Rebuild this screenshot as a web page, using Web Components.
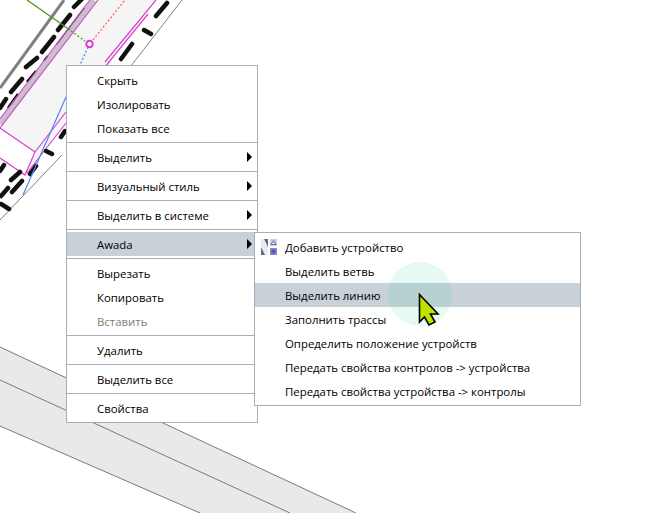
<!DOCTYPE html>
<html>
<head>
<meta charset="utf-8">
<style>
  html, body { margin: 0; padding: 0; background: #fff; }
  body { width: 652px; height: 513px; overflow: hidden; position: relative; font: 11.4px "Open Sans", "Noto Sans", sans-serif; color: #000; }
</style>
</head>
<body>
<cad-canvas></cad-canvas>

<context-menu style="left:66px;top:65px;width:192px">
  <menu-item>Скрыть</menu-item>
  <menu-item>Изолировать</menu-item>
  <menu-item>Показать все</menu-item>
  <menu-separator></menu-separator>
  <menu-item submenu>Выделить</menu-item>
  <menu-separator></menu-separator>
  <menu-item submenu>Визуальный стиль</menu-item>
  <menu-separator></menu-separator>
  <menu-item submenu>Выделить в системе</menu-item>
  <menu-separator></menu-separator>
  <menu-item submenu active>Awada</menu-item>
  <menu-separator></menu-separator>
  <menu-item>Вырезать</menu-item>
  <menu-item>Копировать</menu-item>
  <menu-item disabled>Вставить</menu-item>
  <menu-separator></menu-separator>
  <menu-item>Удалить</menu-item>
  <menu-separator></menu-separator>
  <menu-item>Выделить все</menu-item>
  <menu-separator></menu-separator>
  <menu-item>Свойства</menu-item>
</context-menu>

<context-menu style="left:254px;top:232px;width:327px">
  <menu-item>
    <svg slot="icon" width="16" height="16" viewBox="0 0 16 16">
      <rect x="0" y="0" width="7" height="16" fill="#5d6b7a"/>
      <path d="M0 0H3L7 8V16H4L0 8Z" fill="#e8ecf0"/>
      <rect x="9" y="0" width="7" height="7" fill="#c9d0dc"/>
      <path d="M12.5 1.5L15 5.5H10Z" fill="#e4e8f4" stroke="#6a62c8"/>
      <rect x="9" y="9" width="7" height="7" fill="#8592a2"/>
      <rect x="10.5" y="10.5" width="4" height="4" fill="#5a4ee6"/>
    </svg>
    Добавить устройство
  </menu-item>
  <menu-item>Выделить ветвь</menu-item>
  <menu-item active>Выделить линию</menu-item>
  <menu-item>Заполнить трассы</menu-item>
  <menu-item>Определить положение устройств</menu-item>
  <menu-item>Передать свойства контролов -&gt; устройства</menu-item>
  <menu-item>Передать свойства устройства -&gt; контролы</menu-item>
</context-menu>

<pointer-halo style="left:388px;top:262px"></pointer-halo>

<script>
class CadCanvas extends HTMLElement {
  constructor() {
    super();
    this.attachShadow({ mode: 'open' });
  }

  connectedCallback() {
    // Drawing coordinates are the page's pixels
    this.shadowRoot.innerHTML = `
      <style>
        :host { position: absolute; left: 0; top: 0; width: 652px; height: 513px; display: block; }
        svg { display: block; }
        .thin { fill: none; stroke: #7a7a7a; stroke-width: 1; }
        .pink { fill: none; stroke: #d840d8; stroke-width: 1.2; }
        .dash { fill: none; stroke: #111; stroke-width: 4.5; stroke-linecap: round; }
      </style>
      <svg width="652" height="513" viewBox="0 0 652 513">
        <!-- floor strips lower left -->
        <path d="M0 347L356 513H200L0 426Z" fill="#e9e9e9"/>
        <path class="thin" d="M0 347L356 513M0 380L290 513M0 426L200 513"/>

        <!-- duct running up to the right -->
        <path d="M98 0L0 128L35 152L25 175L66 120L156 0Z" fill="#f5f5f5"/>
        <path d="M64 0L0 88" fill="none" stroke="#808080" stroke-width="3"/>
        <path d="M182 0L66 150M62 155L0 220" fill="none" stroke="#808080" stroke-width="1"/>
        <path class="dash" d="M74 7L82 -1M58 30L70 15M42 52L54 37M26 67L37 58M11 92L22 79M0 108L6 99"/>
        <path d="M57 45L85 8M44 61L48 56M27 82L36 71M8 108L18 94" fill="none" stroke="#000" stroke-width="2.5"/>
        <path d="M94 0L0 124" fill="none" stroke="#c4c4c4" stroke-width="5"/>
        <path class="pink" d="M90 0L0 119M98 0L0 128"/>
        <path class="pink" d="M0 128L35 152L25 175L0 158M35 152L66 112M156 0L105 62M27 173L66 123M100 73L148 14"/>
        <path class="dash" d="M156 16L167 3M121 59L132 44M144 30L151 34M46 151L52 154M30 174L36 166M61 137L65 131M11 180L20 172M12 192L22 181M1 196L8 188M1 204L9 209M0 171L4 165"/>

        <!-- axes of the grip -->
        <path d="M27 0L70 30" stroke="#4f9a10" stroke-width="1.3" fill="none"/>
        <path d="M71 31L85 41" stroke="#4f9a10" stroke-width="1.3" stroke-dasharray="2 2" fill="none"/>
        <path d="M93 40L125 0" stroke="#ff6060" stroke-width="1.3" stroke-dasharray="2 2" fill="none"/>
        <path d="M88 47L66 97" stroke="#4f86f0" stroke-width="1.3" stroke-dasharray="2 2" fill="none"/>
        <path d="M66 97L23 195" stroke="#4f86f0" stroke-width="1.2" fill="none"/>
        <circle cx="89.5" cy="44" r="3.2" fill="#fff" stroke="#dd33dd" stroke-width="2"/>
      </svg>
    `;
  }
}

class ContextMenu extends HTMLElement {
  constructor() {
    super();
    this.attachShadow({ mode: 'open' });
    this.shadowRoot.innerHTML = `
      <style>
        :host {
          position: absolute;
          display: block;
          box-sizing: border-box;
          background: #fff;
          border: 1px solid #a5aebb;
          padding: 2px 0;
        }
      </style>
      <slot></slot>
    `;
  }
}

class MenuItem extends HTMLElement {
  constructor() {
    super();
    this.attachShadow({ mode: 'open' });
    this.shadowRoot.innerHTML = `
      <style>
        :host {
          display: flex;
          align-items: center;
          height: 24px;
          color: #000;
          white-space: nowrap;
        }
        :host([active]) { background: #c9d1d8; }
        :host([disabled]) { color: #7d7d7d; }
        .icon { width: 16px; height: 16px; margin: 0 8px 0 6px; flex: none; }
        .label { flex: 1; }
        .arrow {
          display: none;
          width: 0;
          height: 0;
          margin-right: 5px;
          border-left: 5px solid #000;
          border-top: 5px solid transparent;
          border-bottom: 5px solid transparent;
        }
        :host([submenu]) .arrow { display: block; }
      </style>
      <span class="icon"><slot name="icon"></slot></span>
      <span class="label"><slot></slot></span>
      <span class="arrow"></span>
    `;
  }
}

class MenuSeparator extends HTMLElement {
  constructor() {
    super();
    this.attachShadow({ mode: 'open' });
    this.shadowRoot.innerHTML = `
      <style>
        :host { display: block; height: 1px; margin: 2px 0; background: #a5aebb; }
      </style>
    `;
  }
}

class PointerHalo extends HTMLElement {
  constructor() {
    super();
    this.attachShadow({ mode: 'open' });
    this.shadowRoot.innerHTML = `
      <style>
        :host {
          position: absolute;
          display: block;
          width: 64px;
          height: 64px;
          border-radius: 50%;
          background: rgba(40, 200, 150, 0.11);
        }
        svg { position: absolute; left: 0; top: 0; overflow: visible; }
      </style>
      <svg width="64" height="64" viewBox="388 262 64 64">
        <path d="M419.5 294.5L438 314H430.5L435 322L429 325L424.5 317L419.5 322Z" fill="#bce400" stroke="#000" stroke-width="1.6" stroke-linejoin="miter"/>
      </svg>
    `;
  }
}

customElements.define('cad-canvas', CadCanvas);
customElements.define('context-menu', ContextMenu);
customElements.define('menu-item', MenuItem);
customElements.define('menu-separator', MenuSeparator);
customElements.define('pointer-halo', PointerHalo);
</script>
</body>
</html>
